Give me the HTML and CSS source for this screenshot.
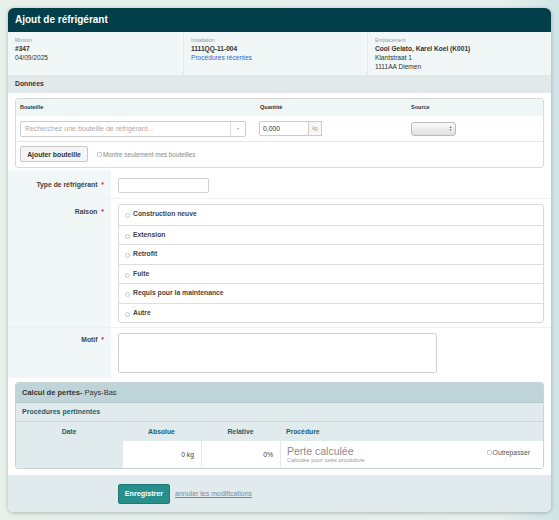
FILE: index.html
```html
<!DOCTYPE html>
<html lang="fr">
  <head>
    <meta charset="UTF-8" />
    <title>Ajout de réfrigérant</title>
    <link rel="stylesheet" href="styles.css">
  </head>
  <body>
    <div class="card">
      <div class="card-title">Ajout de réfrigérant</div>

      <div class="info">
        <div class="info-cell">
          <div class="info-label">Mission</div>
          <div class="info-value strong">#347</div>
          <div class="info-value">04/09/2025</div>
        </div>
        <div class="info-cell">
          <div class="info-label">Installation</div>
          <div class="info-value strong">1111QQ-11-004</div>
          <div class="info-value"><a href="#" class="blue-link">Procédures récentes</a></div>
        </div>
        <div class="info-cell">
          <div class="info-label">Emplacement</div>
          <div class="info-value strong">Cool Gelato, Karel Koel (K001)</div>
          <div class="info-value">Klantstraat 1</div>
          <div class="info-value">1111AA Diemen</div>
        </div>
      </div>

      <div class="section-title">Données</div>

      <div class="section">
        <div class="bottles">
          <div class="bottles-head">
            <div>Bouteille</div>
            <div>Quantité</div>
            <div>Source</div>
          </div>
          <div class="bottles-row">
            <div class="cell">
              <div class="search">
                <span class="search-text">Recherchez une bouteille de réfrigérant...</span>
                <span class="search-caret">&#9662;</span>
              </div>
            </div>
            <div class="cell">
              <div class="qty">
                <span class="qty-input">0,000</span>
                <span class="qty-unit">kg</span>
              </div>
            </div>
            <div class="cell">
              <span class="select"><span class="arrows">&#9650;<br>&#9660;</span></span>
            </div>
          </div>
          <div class="bottles-actions">
            <button class="btn-light">Ajouter bouteille</button>
            <span class="check"></span>
            <span class="check-label">Montre seulement mes bouteilles</span>
          </div>
        </div>
      </div>

      <div class="form-row first">
        <div class="form-label">Type de réfrigérant <span class="req">*</span></div>
        <div class="form-field"><div class="text-input"></div></div>
      </div>
      <div class="form-row raison">
        <div class="form-label">Raison <span class="req">*</span></div>
        <div class="form-field">
          <div class="radio-list">
            <div class="radio-item"><span class="radio"></span>Construction neuve</div>
            <div class="radio-item"><span class="radio"></span>Extension</div>
            <div class="radio-item"><span class="radio"></span>Retrofit</div>
            <div class="radio-item"><span class="radio"></span>Fuite</div>
            <div class="radio-item"><span class="radio"></span>Requis pour la maintenance</div>
            <div class="radio-item"><span class="radio"></span>Autre</div>
          </div>
        </div>
      </div>
      <div class="form-row motif">
        <div class="form-label">Motif <span class="req">*</span></div>
        <div class="form-field"><div class="textarea"></div></div>
      </div>

      <div class="section loss-wrap">
        <div class="loss">
          <div class="loss-head"><b>Calcul de pertes-</b> Pays-Bas</div>
          <div class="loss-sub">Procédures pertinentes</div>
          <div class="loss-table">
            <div class="th center">Date</div>
            <div class="th center">Absolue</div>
            <div class="th center">Relative</div>
            <div class="th">Procédure</div>
            <div class="td date"></div>
            <div class="td num">0 kg</div>
            <div class="td num">0%</div>
            <div class="td proc">
              <div>
                <div class="proc-title">Perte calculée</div>
                <div class="proc-sub">Calculée pour cette procédure</div>
              </div>
              <div class="override"><span class="check"></span>Outrepasser</div>
            </div>
          </div>
        </div>
      </div>

      <div class="footer">
        <button class="btn-save">Enregistrer</button>
        <a href="#" class="cancel">annuler les modifications</a>
      </div>
    </div>
  </body>
</html>
```

FILE: styles.css
```css
* {
  box-sizing: border-box;
}
html,
body {
  margin: 0;
  height: 520px;
}
body {
  font-family: "Liberation Sans", Arial, sans-serif;
  background: linear-gradient(to right, #e7f1ea 0%, #e6efec 90%, #cfe4e6 100%);
  padding: 8px;
  color: #333;
}

.card {
  width: 543px;
  height: 504px;
  background: white;
  border-radius: 6px;
  overflow: hidden;
  box-shadow: 0 1px 4px rgba(0, 0, 0, 0.25);
  display: flex;
  flex-direction: column;
}
.card-title {
  height: 24px;
  line-height: 24px;
  background: #023f4a;
  color: white;
  font-weight: bold;
  font-size: 10px;
  padding: 0 7px;
}

/* info block */
.info {
  display: grid;
  grid-template-columns: 175px 184px 1fr;
  background: #f1f6f6;
}
.info-cell {
  padding: 4px 7px;
  border-left: 1px solid #e3eced;
}
.info-cell:first-child {
  border-left: none;
}
.info-label {
  font-size: 5px;
  line-height: 8px;
  color: #999;
}
.info-value {
  font-size: 6.6px;
  line-height: 9px;
  color: #333;
}
.info-value.strong {
  font-weight: bold;
}
.blue-link {
  color: #2c6bd6;
  text-decoration: none;
}

.section-title {
  height: 18px;
  line-height: 18px;
  background: #e1e9eb;
  font-size: 6.8px;
  font-weight: bold;
  padding: 0 7px;
}
.section {
  padding: 5px 7px 0;
}

/* bottles box */
.bottles {
  border: 1px solid #dadada;
  border-radius: 3px;
}
.bottles-head,
.bottles-row {
  display: grid;
  grid-template-columns: 240px 151px 1fr;
}
.bottles-head {
  height: 17px;
  line-height: 17px;
  background: #f0f6f6;
  font-size: 5.5px;
  font-weight: bold;
}
.bottles-head div,
.bottles-row .cell {
  padding-left: 4px;
}
.bottles-row {
  height: 26px;
  align-items: center;
  border-bottom: 1px solid #e6e6e6;
}
.search {
  display: flex;
  width: 226px;
  height: 16px;
  border: 1px solid #ccc;
  border-radius: 2px;
  font-size: 7px;
  color: #aaa;
}
.search-text {
  flex: 1;
  line-height: 14px;
  padding-left: 4px;
}
.search-caret {
  width: 15px;
  border-left: 1px solid #ddd;
  text-align: center;
  line-height: 14px;
  font-size: 4px;
}
.qty {
  display: flex;
  height: 15px;
  margin-left: -1px;
}
.qty-input {
  width: 50px;
  border: 1px solid #ccc;
  border-radius: 2px 0 0 2px;
  font-size: 6.8px;
  line-height: 13px;
  padding-left: 3px;
}
.qty-unit {
  width: 13px;
  border: 1px solid #ccc;
  border-left: none;
  background: #f7f7f7;
  font-size: 5px;
  color: #999;
  line-height: 13px;
  text-align: center;
}
.select {
  display: block;
  width: 45px;
  height: 14px;
  border: 1px solid #bbb;
  border-radius: 3px;
  background: linear-gradient(#fafafa, #e0e0e0);
  position: relative;
}
.arrows {
  position: absolute;
  right: 3px;
  top: 3px;
  font-size: 3px;
  line-height: 3px;
  color: #555;
}
.bottles-actions {
  height: 25px;
  display: flex;
  align-items: center;
  padding-left: 4px;
  padding-bottom: 1px;
}
.btn-light {
  width: 68px;
  height: 16px;
  padding: 0;
  background: #f5f5f5;
  border: 1px solid #c8c8c8;
  border-radius: 2px;
  font-family: inherit;
  font-size: 6.8px;
  font-weight: bold;
  color: #333;
  margin-right: 9px;
}
.check {
  display: inline-block;
  width: 5px;
  height: 5px;
  border: 1px solid #ccc;
  border-radius: 1px;
  margin-right: 1px;
}
.check-label {
  font-size: 6.3px;
  color: #888;
}

/* form rows */
.form-row {
  display: flex;
  border-top: 1px solid #eef1f1;
}
.form-row.first {
  margin-top: 2px;
  border-top: none;
  height: 28px;
}
.form-row.raison {
  height: 129px;
}
.form-row.motif {
  height: 51px;
}
.form-label {
  width: 103px;
  flex: none;
  background: #f1f6f6;
  text-align: right;
  font-size: 6.8px;
  font-weight: bold;
  color: #444;
  line-height: 14px;
  padding: 8px 7px 0 0;
}
.raison .form-label {
  padding-top: 6px;
}
.motif .form-label {
  padding-top: 5px;
}
.req {
  color: #d4145a;
  margin-left: 2px;
}
.form-field {
  flex: 1;
  padding: 5px 7px;
}
.first .form-field {
  padding-top: 8px;
}
.text-input {
  width: 91px;
  height: 15px;
  border: 1px solid #d2d2d2;
  border-radius: 2px;
}
.radio-list {
  border: 1px solid #d8d8d8;
  border-radius: 3px;
}
.radio-item {
  height: 19.5px;
  line-height: 18px;
  border-top: 1px solid #dedede;
  font-size: 6.8px;
  font-weight: bold;
  color: #444;
  padding-left: 6px;
}
.radio-item:first-child {
  border-top: none;
}
.radio {
  display: inline-block;
  width: 5px;
  height: 5px;
  border: 1px solid #ccc;
  border-radius: 50%;
  margin-right: 3px;
  vertical-align: -2px;
}
.textarea {
  width: 319px;
  height: 40px;
  border: 1px solid #d2d2d2;
  border-radius: 2px;
}

/* loss calculation */
.loss-wrap {
  padding-top: 4px;
}
.loss {
  border: 1px solid #c8d6d9;
  border-radius: 3px;
  overflow: hidden;
}
.loss-head {
  height: 20px;
  line-height: 19px;
  background: #bfd4d8;
  font-size: 7.5px;
  padding-left: 6px;
  color: #333;
  border-bottom: 1px solid #b2c6ca;
}
.loss-sub {
  height: 19px;
  line-height: 18px;
  background: #e1eaec;
  font-size: 7px;
  font-weight: bold;
  color: #1b6070;
  padding-left: 6px;
  border-bottom: 1px solid #c9d5d8;
}
.loss-table {
  display: grid;
  grid-template-columns: 106px 79px 79px 1fr;
  background: #e1eaec;
}
.th {
  height: 19px;
  line-height: 19px;
  font-size: 6.8px;
  font-weight: bold;
  color: #1b6070;
  padding-left: 6px;
}
.th.center {
  text-align: center;
  padding-left: 0;
}
.td {
  height: 27px;
  background: white;
  border-left: 1px solid #e1eaec;
  font-size: 6.8px;
  color: #444;
}
.td.date {
  background: #e1eaec;
  border-left: none;
}
.td.num {
  text-align: right;
  line-height: 27px;
  padding-right: 7px;
}
.td.proc {
  display: flex;
  justify-content: space-between;
  padding: 5px 13px 0 6px;
}
.proc-title {
  font-size: 10.5px;
  line-height: 11px;
  color: #8a8a8a;
}
.proc-sub {
  font-size: 5.8px;
  line-height: 7px;
  color: #999;
}
.override {
  font-size: 6.8px;
  color: #555;
  padding-top: 3px;
}

/* footer */
.footer {
  margin-top: 6px;
  flex: 1;
  background: #e1eaec;
  display: flex;
  align-items: center;
  padding-left: 110px;
}
.btn-save {
  width: 52px;
  height: 20px;
  padding: 0;
  background: #27908c;
  border: 1px solid #1f7a77;
  border-radius: 2px;
  color: white;
  font-family: inherit;
  font-weight: bold;
  font-size: 7.2px;
  margin-right: 5px;
}
.cancel {
  font-size: 7px;
  color: #7c8a98;
}
```
